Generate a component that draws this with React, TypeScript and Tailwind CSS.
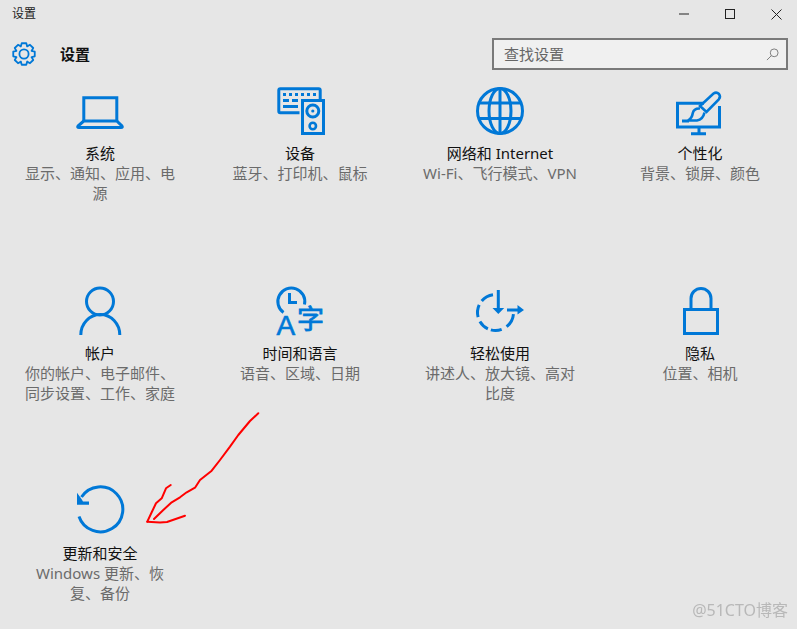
import type { ReactNode } from 'react'

const blue = '#0078d7'

// clockwise degrees from north
function arc(cx: number, cy: number, r: number, from: number, to: number) {
  const pt = (a: number) => {
    const t = (a * Math.PI) / 180
    return `${(cx + r * Math.sin(t)).toFixed(2)} ${(cy - r * Math.cos(t)).toFixed(2)}`
  }
  return `M${pt(from)} A${r} ${r} 0 ${to - from > 180 ? 1 : 0} 1 ${pt(to)}`
}

function gearPath(cx: number, cy: number) {
  const pts: string[] = []
  for (let i = 0; i < 8; i++) {
    const a = (i * 45 * Math.PI) / 180
    const spots: [number, number][] = [
      [-23, 8.2],
      [-12, 11],
      [12, 11],
      [23, 8.2],
    ]
    for (const [off, r] of spots) {
      const t = a + (off * Math.PI) / 180
      pts.push(`${(cx + r * Math.sin(t)).toFixed(2)} ${(cy - r * Math.cos(t)).toFixed(2)}`)
    }
  }
  return 'M' + pts.join(' L') + ' Z'
}

function Icon({ box, children }: { box: string; children: ReactNode }) {
  return (
    <svg
      viewBox={box}
      className="w-[60px] h-[50px] overflow-visible"
      fill="none"
      stroke={blue}
      strokeWidth={3}
    >
      {children}
    </svg>
  )
}

const items = [
  {
    title: '系统',
    desc: '显示、通知、应用、电\n源',
    icon: (
      <Icon box="70 86 60 50">
        <path d="M83.8 121 V97.8 H116.8 V121" />
        <path d="M83.8 121 L78 126 Q77 127.5 79 127.5 H121 Q123 127.5 122 126 L116.8 121 Z" />
      </Icon>
    ),
  },
  {
    title: '设备',
    desc: '蓝牙、打印机、鼠标',
    icon: (
      <Icon box="270 86 60 50">
        <path d="M299.5 112.8 H280.3 Q278.8 112.8 278.8 111.3 V90.3 Q278.8 88.8 280.3 88.8 H318.7 Q320.2 88.8 320.2 90.3 V99" />
        <rect x="302.5" y="100.5" width="21" height="33" />
        <circle cx="312.8" cy="111" r="6" />
        <circle cx="312.8" cy="111" r="1.6" fill={blue} stroke="none" />
        <circle cx="312.8" cy="126" r="3.2" strokeWidth={2.6} />
        <g fill={blue} stroke="none">
          <rect x="283" y="93" width="3" height="3" />
          <rect x="289" y="93" width="3" height="3" />
          <rect x="295" y="93" width="3" height="3" />
          <rect x="301" y="93" width="3" height="3" />
          <rect x="307" y="93" width="3" height="3" />
          <rect x="313" y="93" width="3" height="3" />
          <rect x="283" y="99" width="6" height="3" />
          <rect x="292" y="99" width="6" height="3" />
          <rect x="283" y="105" width="15" height="3" />
        </g>
      </Icon>
    ),
  },
  {
    title: '网络和 Internet',
    desc: 'Wi-Fi、飞行模式、VPN',
    icon: (
      <Icon box="470 86 60 50">
        <circle cx="500" cy="111" r="22.5" />
        <ellipse cx="500" cy="111" rx="11" ry="22.5" />
        <path d="M500 88.5 V133.5 M480 103 H520 M480 118.5 H520" />
      </Icon>
    ),
  },
  {
    title: '个性化',
    desc: '背景、锁屏、颜色',
    icon: (
      <Icon box="670 86 60 50">
        <path d="M704 103.2 H677.5 V127 H719.5 V106" />
        <path d="M699 127 V133.5 M691 133.7 H706" />
        <path d="M682 121 H689" />
        <path d="M713.5 93.5 Q716.5 91.5 719 94 Q721 96.5 718.8 99.3 L706.5 112 L700 106 Z" strokeWidth={2.6} />
        <path d="M700 108.5 Q694 108 692.8 113 Q692 118.5 688 120.5 H697 Q703 119.5 704.5 112.5" strokeWidth={2.6} />
      </Icon>
    ),
  },
  {
    title: '帐户',
    desc: '你的帐户、电子邮件、\n同步设置、工作、家庭',
    icon: (
      <Icon box="70 286 60 50">
        <circle cx="100" cy="301.5" r="13.5" />
        <path d="M80.8 335 A19.5 20.5 0 0 1 119.8 335" />
      </Icon>
    ),
  },
  {
    title: '时间和语言',
    desc: '语音、区域、日期',
    icon: (
      <Icon box="270 286 60 50">
        <path d="M283.5 312.5 A13.5 13.5 0 1 1 304.5 304.5" />
        <path d="M289.5 293 V302.5 H297" />
        <text
          x="276.5"
          y="334.5"
          fill={blue}
          stroke={blue}
          strokeWidth={0.6}
          fontSize="28"
          fontFamily="'Liberation Sans', sans-serif"
        >
          A
        </text>
        <text
          x="297"
          y="329"
          fill={blue}
          stroke={blue}
          strokeWidth={0.8}
          fontSize="27"
          fontFamily="'Noto Sans CJK SC', sans-serif"
        >
          字
        </text>
      </Icon>
    ),
  },
  {
    title: '轻松使用',
    desc: '讲述人、放大镜、高对\n比度',
    icon: (
      <Icon box="470 286 60 50">
        <path d={arc(495.5, 312.5, 18, -50, -8)} />
        <path d={arc(495.5, 312.5, 18, -105, -65)} />
        <path d={arc(495.5, 312.5, 18, -155, -120)} />
        <path d={arc(495.5, 312.5, 18, 160, 195)} />
        <path d={arc(495.5, 312.5, 18, 95, 142)} />
        <path d="M498.3 290 V310 M507 310 H520" />
        <path d="M492.5 308 H504.2 L498.3 314 Z M517.5 305 L524 310 L517.5 314.5 Z" fill={blue} stroke="none" />
      </Icon>
    ),
  },
  {
    title: '隐私',
    desc: '位置、相机',
    icon: (
      <Icon box="670 286 60 50">
        <rect x="684.5" y="309.5" width="33" height="24" />
        <path d="M691 309.5 V298.5 A10 10 0 0 1 711 298.5 V309.5" />
      </Icon>
    ),
  },
  {
    title: '更新和安全',
    desc: 'Windows 更新、恢\n复、备份',
    icon: (
      <Icon box="70 486 60 50">
        <path d="M79 516.5 A22.5 22.5 0 1 0 81.5 497" />
        <path d="M77 492.7 V504.8 H89 V501.6 H83 L81.5 499 Z" fill={blue} stroke="none" />
      </Icon>
    ),
  },
]

export default function App() {
  return (
    <div className="relative w-[797px] h-[629px] overflow-hidden bg-[#e6e6e6] font-['Noto_Sans','Noto_Sans_CJK_SC',sans-serif]">
      {/* title bar */}
      <div className="flex items-center justify-between h-[28px] pl-3">
        <span className="text-[12px] leading-[26px] text-[#222]">设置</span>
        <div className="flex items-center">
          <svg viewBox="0 0 10 10" className="w-[10px] h-[10px] mr-9" stroke="#222" strokeWidth={1}>
            <path d="M0 5 H10" />
          </svg>
          <svg viewBox="0 0 10 10" className="w-[10px] h-[10px] mr-9" stroke="#222" strokeWidth={1} fill="none">
            <rect x="0.5" y="0.5" width="9" height="9" />
          </svg>
          <svg viewBox="0 0 11 11" className="w-[11px] h-[11px] mr-[15px]" stroke="#222" strokeWidth={1}>
            <path d="M0.5 0.5 L10.5 10.5 M10.5 0.5 L0.5 10.5" />
          </svg>
        </div>
      </div>

      {/* header with search */}
      <div className="flex items-start justify-between h-[58px] pl-3 pr-[9px]">
        <div className="flex items-center h-[32px] mt-[10px]">
          <svg viewBox="12 42 24 24" className="w-6 h-6" fill="none" stroke={blue} strokeWidth={1.8} strokeLinejoin="round">
            <path d={gearPath(24, 54)} />
            <circle cx="24" cy="54" r="4.6" />
          </svg>
          <span className="ml-6 text-[15px] font-bold text-[#111]">设置</span>
        </div>
        <div className="flex items-center justify-between w-[296px] h-[32px] mt-[10px] pl-[10px] pr-[7px] bg-[#f0f0f0] border-2 border-[#7a7a7a]">
          <span className="text-[15px] text-[#666]">查找设置</span>
          <svg viewBox="0 0 14 14" className="w-[13px] h-[13px]" fill="none" stroke="#777" strokeWidth={1}>
            <circle cx="8.8" cy="5.2" r="4.2" />
            <path d="M5.8 8.2 L1 13" />
          </svg>
        </div>
      </div>

      {/* settings grid */}
      <div className="grid grid-cols-[repeat(4,200px)] auto-rows-[200px]">
        {items.map((item) => (
          <div key={item.title} className="flex flex-col items-center">
            {item.icon}
            <div className="mt-[7px] text-[15px] leading-[20px] text-[#111] text-center">{item.title}</div>
            <div className="w-[180px] whitespace-pre-line text-[15px] leading-[20px] text-[#6b6b6b] text-center">{item.desc}</div>
          </div>
        ))}
      </div>

      {/* hand drawn arrow */}
      <svg
        viewBox="0 0 797 629"
        className="absolute inset-0 w-[797px] h-[629px] pointer-events-none"
        fill="none"
        stroke="#ff0000"
        strokeWidth={2}
        strokeLinejoin="round"
        strokeLinecap="round"
      >
        <path d="M258.3 413.3 L250 421 L238.3 435 L230 446.7 L220 460 L211.7 470.7 L200 480 L195 487.7 L186.7 492.3 L180 497.3 L171.7 502.3 L163.3 510 L154 519" />
        <path d="M170.7 485 L166 488.3 L161.7 498.3 L156 503.3 L151.7 512.3 L147.3 521.7" />
        <path d="M147.3 521.7 L160 522.5 L167 522 L185 515.7" />
      </svg>

      <span className="absolute right-[9px] top-[600px] text-[16px] leading-[20px] text-[#b8b8b8] blur-[0.4px]">
        @51CTO博客
      </span>
    </div>
  )
}
